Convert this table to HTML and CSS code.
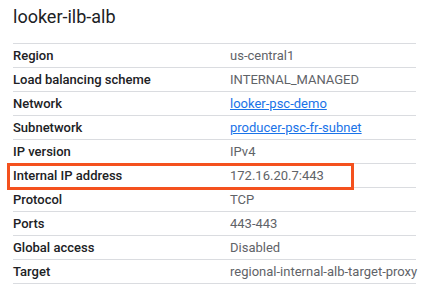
FILE: index.html
```html
<!DOCTYPE html>
<html lang="en">
<head>
    <meta charset="UTF-8">
    <meta name="viewport" content="width=device-width, initial-scale=1.0">
    <title>looker-ilb-alb</title>
    <link rel="stylesheet" href="styles.css">
</head>
<body>
    <div class="panel">
        <h1>looker-ilb-alb</h1>

        <div class="props">
            <div class="row"><span class="key">Region</span><span class="val">us-central1</span></div>
            <div class="row"><span class="key">Load balancing scheme</span><span class="val">INTERNAL_MANAGED</span></div>
            <div class="row"><span class="key">Network</span><span class="val"><a href="#">looker-psc-demo</a></span></div>
            <div class="row"><span class="key">Subnetwork</span><span class="val"><a href="#">producer-psc-fr-subnet</a></span></div>
            <div class="row"><span class="key">IP version</span><span class="val">IPv4</span></div>
            <div class="row marked"><span class="key">Internal IP address</span><span class="val">172.16.20.7:443</span></div>
            <div class="row"><span class="key">Protocol</span><span class="val">TCP</span></div>
            <div class="row"><span class="key">Ports</span><span class="val">443-443</span></div>
            <div class="row"><span class="key">Global access</span><span class="val">Disabled</span></div>
            <div class="row"><span class="key">Target</span><span class="val">regional-internal-alb-target-proxy</span></div>
        </div>
    </div>
</body>
</html>
```
FILE: styles.css
```css
body {
    margin: 0;
    background-color: #fff;
    font-family: Roboto, "Liberation Sans", Arial, sans-serif;
}
.panel {
    padding: 0 30px 0 13px;
}
h1 {
    margin: 0;
    padding-top: 6px;
    height: 37px;
    font-size: 18px;
    font-weight: 400;
    color: #202124;
}
.props {
    border-top: 1px solid #dadce0;
}
.row {
    position: relative;
    display: grid;
    grid-template-columns: 217px 1fr;
    align-items: center;
    height: 23px;
    border-bottom: 1px solid #dadce0;
    font-size: 13px;
}
.key {
    font-weight: 500;
    color: #202124;
}
.val {
    color: #5f6368;
    white-space: nowrap;
}
.val a {
    color: #1a73e8;
}
.row.marked::after {
    content: "";
    position: absolute;
    left: -6px;
    top: -1px;
    width: 341px;
    height: 21px;
    border: 3px solid #f4511e;
}
```
